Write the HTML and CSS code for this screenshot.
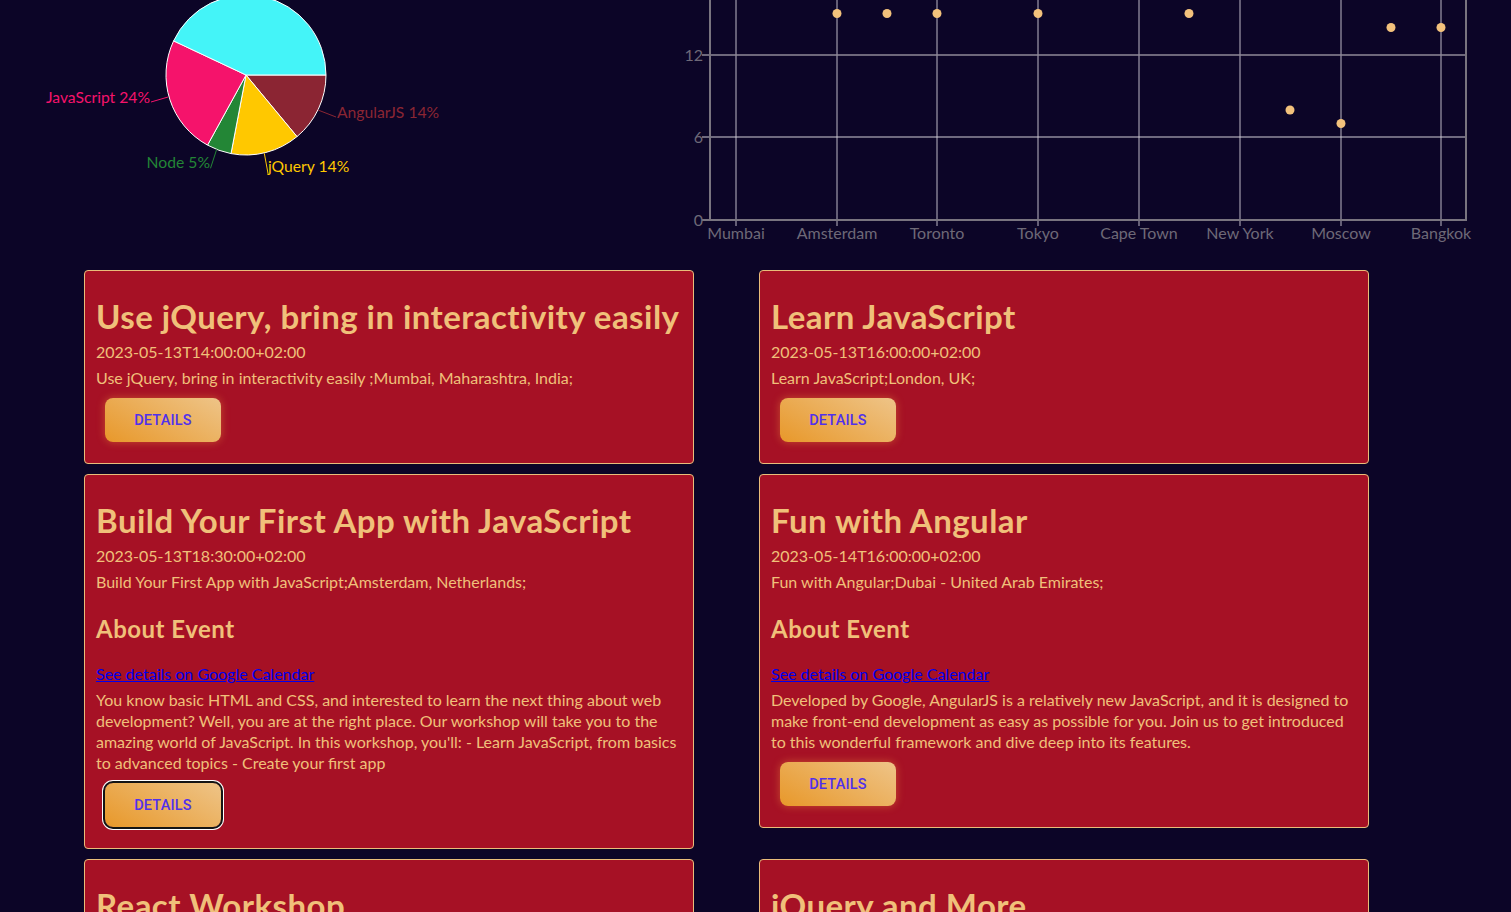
FILE: index.html
```html
<!DOCTYPE html>
<html lang="en">
<head>
<meta charset="utf-8">
<title>Events</title>
<link rel="stylesheet" href="styles.css">
</head>
<body>
<div class="charts">
  <svg class="pie" width="660" height="250" viewBox="0 0 660 250">
    <g stroke="#ffffff" stroke-width="1">
      <path d="M246 75 L326 75 A80 80 0 0 1 297.0 136.6 Z" fill="#8b2533"/>
      <path d="M246 75 L297.0 136.6 A80 80 0 0 1 231.0 153.6 Z" fill="#ffc800"/>
      <path d="M246 75 L231.0 153.6 A80 80 0 0 1 207.5 145.1 Z" fill="#238636"/>
      <path d="M246 75 L207.5 145.1 A80 80 0 0 1 173.6 40.9 Z" fill="#f5136b"/>
      <path d="M246 75 L173.6 40.9 A80 80 0 0 1 326 75 Z" fill="#44f4f8"/>
    </g>
    <g fill="none" stroke-width="1">
      <polyline points="168,97 151,102" stroke="#f5136b"/>
      <polyline points="318,110 336,117" stroke="#8b2533"/>
      <polyline points="264.3,153.3 268.3,175" stroke="#ffc800"/>
      <polyline points="216.7,149.3 210.5,168.3" stroke="#238636"/>
    </g>
    <g class="pie-label">
      <text x="150" y="103" text-anchor="end" fill="#f5136b">JavaScript 24%</text>
      <text x="337" y="118" fill="#8b2533">AngularJS 14%</text>
      <text x="268" y="172" fill="#ffc800">jQuery 14%</text>
      <text x="210" y="168" text-anchor="end" fill="#238636">Node 5%</text>
    </g>
  </svg>
  <svg class="plot" width="851" height="250" viewBox="660 0 851 250">
    <g stroke="#bdb9c6" stroke-width="1">
      <line x1="736" y1="0" x2="736" y2="226"/>
      <line x1="837" y1="0" x2="837" y2="226"/>
      <line x1="937" y1="0" x2="937" y2="226"/>
      <line x1="1038" y1="0" x2="1038" y2="226"/>
      <line x1="1139" y1="0" x2="1139" y2="226"/>
      <line x1="1240" y1="0" x2="1240" y2="226"/>
      <line x1="1341" y1="0" x2="1341" y2="226"/>
      <line x1="1441" y1="0" x2="1441" y2="226"/>
    </g>
    <line x1="702" y1="55" x2="1466" y2="55" stroke="#8f8a98" stroke-width="1.5"/>
    <line x1="702" y1="137" x2="1466" y2="137" stroke="#d2cfd8" stroke-width="1"/>
    <g stroke="#79747f" stroke-width="2" fill="none">
      <line x1="710" y1="0" x2="710" y2="221"/>
      <line x1="702" y1="220" x2="1467" y2="220"/>
      <line x1="1466" y1="0" x2="1466" y2="220"/>
    </g>
    <g class="axis-label" fill="#6e6977">
      <text x="703" y="61" text-anchor="end">12</text>
      <text x="703" y="143" text-anchor="end">6</text>
      <text x="703" y="226" text-anchor="end">0</text>
      <text x="736" y="239" text-anchor="middle">Mumbai</text>
      <text x="837" y="239" text-anchor="middle">Amsterdam</text>
      <text x="937" y="239" text-anchor="middle">Toronto</text>
      <text x="1038" y="239" text-anchor="middle">Tokyo</text>
      <text x="1139" y="239" text-anchor="middle">Cape Town</text>
      <text x="1240" y="239" text-anchor="middle">New York</text>
      <text x="1341" y="239" text-anchor="middle">Moscow</text>
      <text x="1441" y="239" text-anchor="middle">Bangkok</text>
    </g>
    <g fill="#f3c27c">
      <circle cx="837" cy="13.5" r="4.5"/>
      <circle cx="887" cy="13.5" r="4.5"/>
      <circle cx="937" cy="13.5" r="4.5"/>
      <circle cx="1038" cy="13.5" r="4.5"/>
      <circle cx="1189" cy="13.5" r="4.5"/>
      <circle cx="1290" cy="110" r="4.5"/>
      <circle cx="1341" cy="123.5" r="4.5"/>
      <circle cx="1391" cy="27.5" r="4.5"/>
      <circle cx="1441" cy="27.5" r="4.5"/>
    </g>
  </svg>
</div>

<main class="events">
  <article class="card">
    <h2 class="card-title">Use jQuery, bring in interactivity easily</h2>
    <p class="card-line">2023-05-13T14:00:00+02:00</p>
    <p class="card-line">Use jQuery, bring in interactivity easily ;Mumbai, Maharashtra, India;</p>
    <button class="details">Details</button>
  </article>

  <article class="card">
    <h2 class="card-title">Learn JavaScript</h2>
    <p class="card-line">2023-05-13T16:00:00+02:00</p>
    <p class="card-line">Learn JavaScript;London, UK;</p>
    <button class="details">Details</button>
  </article>

  <article class="card">
    <h2 class="card-title">Build Your First App with JavaScript</h2>
    <p class="card-line">2023-05-13T18:30:00+02:00</p>
    <p class="card-line">Build Your First App with JavaScript;Amsterdam, Netherlands;</p>
    <h3 class="card-sub">About Event</h3>
    <p class="card-line"><a href="#">See details on Google Calendar</a></p>
    <p class="card-line">You know basic HTML and CSS, and interested to learn the next thing about web development? Well, you are at the right place. Our workshop will take you to the amazing world of JavaScript. In this workshop, you'll: - Learn JavaScript, from basics to advanced topics - Create your first app</p>
    <button class="details focused">Details</button>
  </article>

  <article class="card">
    <h2 class="card-title">Fun with Angular</h2>
    <p class="card-line">2023-05-14T16:00:00+02:00</p>
    <p class="card-line">Fun with Angular;Dubai - United Arab Emirates;</p>
    <h3 class="card-sub">About Event</h3>
    <p class="card-line"><a href="#">See details on Google Calendar</a></p>
    <p class="card-line">Developed by Google, AngularJS is a relatively new JavaScript, and it is designed to make front-end development as easy as possible for you. Join us to get introduced to this wonderful framework and dive deep into its features.</p>
    <button class="details">Details</button>
  </article>

  <article class="card">
    <h2 class="card-title">React Workshop</h2>
    <p class="card-line">2023-05-15T10:00:00+02:00</p>
    <p class="card-line">React Workshop;Berlin, Germany;</p>
    <button class="details">Details</button>
  </article>

  <article class="card">
    <h2 class="card-title">jQuery and More</h2>
    <p class="card-line">2023-05-15T14:00:00+02:00</p>
    <p class="card-line">jQuery and More;Toronto, Canada;</p>
    <button class="details">Details</button>
  </article>
</main>
</body>
</html>
```

FILE: styles.css
```css
html, body {
  margin: 0;
  padding: 0;
}

body {
  background: #0c0527;
  font-family: "Lato", "Open Sans", sans-serif;
  color: #f0c07a;
}

.charts {
  display: flex;
  height: 250px;
}

.charts svg {
  display: block;
  flex: none;
}

.pie-label text {
  font-family: "Lato", sans-serif;
  font-size: 15.7px;
}

.axis-label text {
  font-family: "Lato", sans-serif;
  font-size: 16px;
}

.events {
  display: grid;
  grid-template-columns: 610px 610px;
  column-gap: 65px;
  row-gap: 10px;
  align-items: start;
  margin: 20px 0 40px 84px;
}

.card {
  background: #a61125;
  border: 1px solid #e9bd7a;
  border-radius: 4px;
  padding: 25px 11px 0;
  display: flex;
  flex-direction: column;
  align-items: flex-start;
}

.card-title {
  margin: 0 0 5px;
  font-size: 33px;
  line-height: 40px;
  letter-spacing: 0.45px;
  font-weight: 700;
}

.card-line {
  margin: 0 0 5px;
  font-size: 16px;
  line-height: 21px;
}

.card-sub {
  margin: 17px 0 19px;
  font-size: 24px;
  line-height: 30px;
  letter-spacing: 0.5px;
  font-weight: 700;
}

.card a {
  color: #0000ee;
  text-decoration: underline;
}

.details {
  margin: 5px 0 21px 9px;
  width: 116px;
  height: 44px;
  border: none;
  border-radius: 8px;
  background: linear-gradient(30deg, #e8982a 0%, #eec488 100%);
  box-shadow: 0 0 8px rgba(240, 150, 60, 0.45);
  color: #5030ec;
  font-family: "Roboto", "Liberation Sans", Arial, sans-serif;
  font-size: 14.5px;
  font-weight: 500;
  letter-spacing: 0.2px;
  text-transform: uppercase;
  cursor: pointer;
}

.details.focused {
  outline: 2px solid #141414;
  box-shadow: 0 0 0 3px #ffffff;
}
```
